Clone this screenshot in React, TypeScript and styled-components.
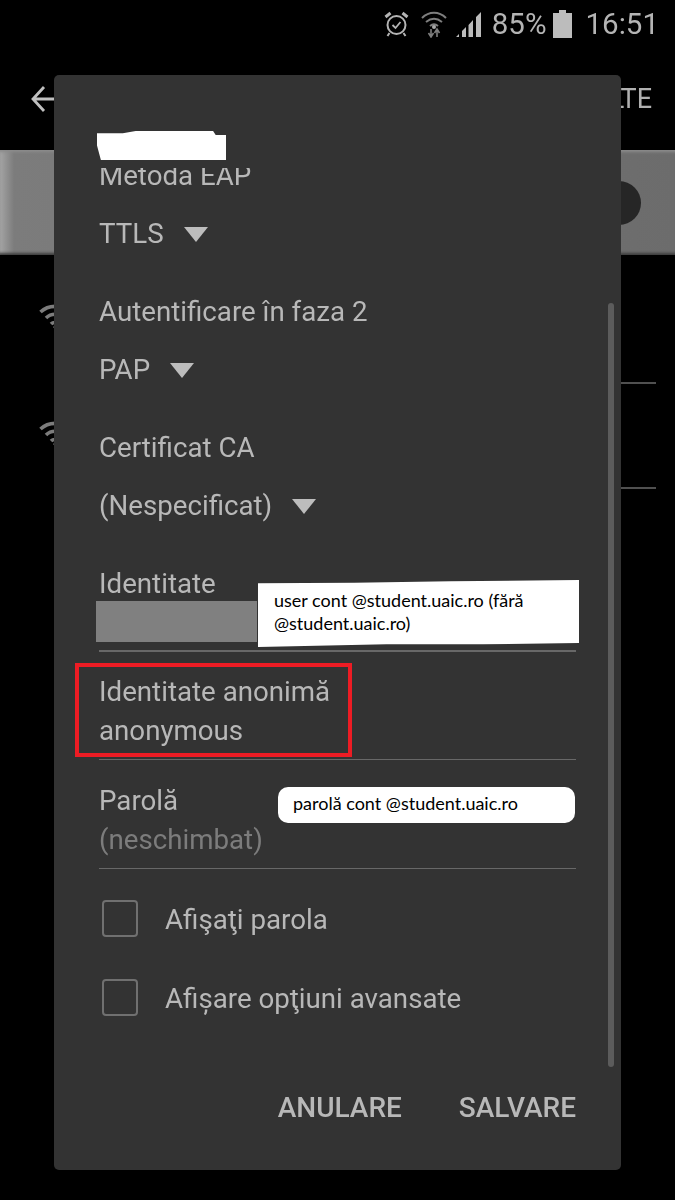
import React from 'react';
import styled, { createGlobalStyle } from 'styled-components';

const Global = createGlobalStyle`
  html, body { margin: 0; padding: 0; background: #000; }
  body { font-family: Roboto, "Liberation Sans", sans-serif; overflow: hidden; }
`;

const Page = styled.div`
  position: relative;
  width: 675px;
  height: 1200px;
  background: #000;
  overflow: hidden;
`;

const Backdrop = styled.div`
  display: flex;
  flex-direction: column;
  filter: blur(0.5px);
`;

const StatusBar = styled.div`
  height: 48px;
  display: flex;
  align-items: center;
  justify-content: flex-end;
  padding-right: 16px;
  color: #b4b4b4;
  font-size: 29.500px;
  line-height: 48px;
`;

const StatusIcon = styled.svg<{ $gap: number }>`
  display: block;
  margin-right: ${(p) => p.$gap}px;
  flex: none;
`;

const Percent = styled.span`
  margin-right: 6px;
`;

const Clock = styled.span`
  margin-left: 14px;
`;

const Toolbar = styled.div`
  height: 102px;
  display: flex;
  align-items: center;
  justify-content: space-between;
  padding: 0 23px 0 31px;
  box-sizing: border-box;
  color: #b0b0b0;
  font-size: 27px;
`;

const Band = styled.div`
  height: 105px;
  display: flex;
  align-items: center;
  justify-content: flex-end;
  padding-right: 34px;
  background: linear-gradient(90deg, #a4a4a4 0, #7c7c7c 14px, #6c6c6c 100%);
  box-shadow: inset 0 4px 3px -2px #8c8c8c, inset 0 -4px 3px -2px #3c3c3c;
`;

const Knob = styled.div`
  width: 44px;
  height: 44px;
  border-radius: 50%;
  background: #262626;
`;

const NetworkRow = styled.div<{ $h: number; $top: number }>`
  height: ${(p) => p.$h}px;
  box-sizing: border-box;
  display: flex;
  flex-direction: column;
  justify-content: space-between;
  padding: ${(p) => p.$top}px 19px 0 39px;
`;

const RowRule = styled.div`
  align-self: flex-end;
  width: 120px;
  height: 2px;
  background: #505050;
`;

const RowGlyph = styled.svg`
  display: block;
`;

const Dialog = styled.div`
  position: absolute;
  left: 54px;
  top: 75px;
  width: 567px;
  height: 1095px;
  box-sizing: border-box;
  padding-top: 93px;
  background: #333;
  border-radius: 5px;
  display: flex;
  flex-direction: column;
  color: #b8b8b8;
  font-size: 27.700px;
  line-height: 39px;
`;

const ScrollArea = styled.div`
  flex: 1;
  min-height: 0;
  overflow: hidden;
  padding: 0 45px;
  filter: blur(0.3px);
`;

const Form = styled.div`
  display: flex;
  flex-direction: column;
  margin-top: -12px;
`;

const SelectField = styled.div`
  display: flex;
  flex-direction: column;
  gap: 19px;
  margin-bottom: 39px;
`;

const Label = styled.div``;

const SelectValue = styled.div`
  display: flex;
  align-items: center;
  gap: 20px;
`;

const Caret = styled.span`
  width: 0;
  height: 0;
  border-left: 12.500px solid transparent;
  border-right: 12.500px solid transparent;
  border-top: 15px solid #bdbdbd;
  margin-top: 2px;
`;

const TextField = styled.div<{ $top: number; $bottom: number; $rule: number }>`
  display: flex;
  flex-direction: column;
  padding-top: ${(p) => p.$top}px;
  padding-bottom: ${(p) => p.$bottom}px;
  border-bottom: ${(p) => p.$rule}px solid #686868;
`;

const Redacted = styled.div`
  width: 161px;
  height: 41px;
  margin: -2px 0 0 -3px;
  background: #808080;
`;

const Placeholder = styled.div`
  color: #7c7c7c;
`;

const CheckRow = styled.div<{ $top: number }>`
  display: flex;
  align-items: center;
  gap: 27px;
  height: 39px;
  margin-top: ${(p) => p.$top}px;
  padding-left: 3px;
`;

const Box = styled.span`
  width: 36px;
  height: 37px;
  margin-top: -2px;
  box-sizing: border-box;
  border: 2px solid #707070;
  border-radius: 4px;
  flex: none;
`;

const Actions = styled.div`
  display: flex;
  justify-content: flex-end;
  gap: 57px;
  padding: 0 45px 43px;
  font-size: 28px;
  font-weight: 500;
  filter: blur(0.3px);
`;

const Scrollbar = styled.div`
  position: absolute;
  left: 554px;
  top: 228px;
  width: 6px;
  height: 764px;
  border-radius: 3px;
  background: #5c5c5c;
`;

const Blob = styled.div<{ $r?: number }>`
  position: absolute;
  background: #fff;
  color: #000;
  font-family: Lato, "Open Sans", sans-serif;
  font-size: 18px;
  line-height: 23px;
  border-radius: ${(p) => p.$r ?? 0}px;
  box-sizing: border-box;
`;

const TopBlob = styled(Blob)`
  left: 43px;
  top: 56px;
  width: 129px;
  height: 29px;
  clip-path: polygon(0 8%, 20% 8%, 30% 0, 90% 0, 92% 14%, 100% 14%, 100% 100%, 3% 100%, 0 50%);
`;

const IdentityNote = styled(Blob)`
  left: 204px;
  top: 505px;
  width: 321px;
  height: 67px;
  padding: 9px 10px 0 16px;
  clip-path: polygon(0 5%, 30% 4%, 60% 2%, 100% 0, 100% 94%, 70% 96%, 40% 96%, 0 100%);
`;

const PasswordNote = styled(Blob)`
  left: 224px;
  top: 712px;
  width: 297px;
  height: 36px;
  padding: 5px 0 0 15px;
`;

const Highlight = styled.div`
  position: absolute;
  left: 21px;
  top: 588px;
  width: 277px;
  height: 94px;
  box-sizing: border-box;
  border: 4px solid #ed1c24;
`;

const Wifi = () => (
  <RowGlyph width={32} height={24} viewBox="0 0 32 24" fill="none" stroke="#7c7c7c" strokeWidth="3.600">
    <path d="M1.500 8c8-7.500 21-7.500 29 0" />
    <path d="M7 14c5-5 13-5 18 0" />
    <path d="M12 20c2-2 6-2 8 0" />
    <circle cx="16" cy="23" r="1.600" fill="#7c7c7c" stroke="none" />
  </RowGlyph>
);

export default function App() {
  return (
    <Page>
      <Global />
      <Backdrop>
        <StatusBar>
          <StatusIcon $gap={12} width="25" height="26" viewBox="0 0 25 26" fill="none" stroke="#b4b4b4" strokeWidth="2">
            <circle cx="12.500" cy="14" r="9" />
            <path d="M8.500 14l3 3 5-6" strokeWidth="1.800" />
            <path d="M1.500 6l5-4M23.500 6l-5-4" strokeWidth="3" />
            <path d="M5.500 22l-2 3M19.500 22l2 3" />
          </StatusIcon>
          <StatusIcon $gap={9} width="26" height="28" viewBox="0 0 26 28" fill="none" stroke="#7e7e7e" strokeWidth="2">
            <path d="M1 8c7-7 17-7 24 0" />
            <path d="M5 12c5-4 11-4 16 0" />
            <path d="M9 16c2.500-2 5.500-2 8 0" />
            <circle cx="13" cy="17" r="2" fill="#a8a8a8" stroke="none" />
            <path d="M10 19v8M7.500 23l2.500 4 2.500-4M16 27v-8M13.500 23l2.500-4 2.500 4" strokeWidth="1.600" />
          </StatusIcon>
          <StatusIcon $gap={11} width="25" height="25" viewBox="0 0 25 25" fill="#bcbcbc">
            <path d="M0 25l3-3v3zM6 25v-6l4-4v10zM12.500 25V13l4.500-5v17zM20 25V5l5-5v25z" />
          </StatusIcon>
          <Percent>85%</Percent>
          <StatusIcon $gap={0} width="19" height="28" viewBox="0 0 19 28" fill="#bcbcbc">
            <path d="M6 0h7v3h6v25H0V3h6z" />
          </StatusIcon>
          <Clock>16:51</Clock>
        </StatusBar>
        <Toolbar>
          <svg width="24" height="28" viewBox="0 0 24 28" fill="none" stroke="#c0c0c0" strokeWidth="2.800">
            <path d="M24 14H2M13 2L2 14l11 12" />
          </svg>
          <span>MULTE</span>
        </Toolbar>
        <Band>
          <Knob />
        </Band>
        <NetworkRow $h={129} $top={49}>
          <Wifi />
          <RowRule />
        </NetworkRow>
        <NetworkRow $h={105} $top={37}>
          <Wifi />
          <RowRule />
        </NetworkRow>
      </Backdrop>

      <Dialog>
        <ScrollArea>
          <Form>
            <SelectField>
              <Label>Metoda EAP</Label>
              <SelectValue>TTLS <Caret /></SelectValue>
            </SelectField>
            <SelectField>
              <Label>Autentificare în faza 2</Label>
              <SelectValue>PAP <Caret /></SelectValue>
            </SelectField>
            <SelectField>
              <Label>Certificat CA</Label>
              <SelectValue>(Nespecificat) <Caret /></SelectValue>
            </SelectField>
            <TextField $top={0} $bottom={8} $rule={2}>
              <Label>Identitate</Label>
              <Redacted />
            </TextField>
            <TextField $top={20} $bottom={9} $rule={1}>
              <Label>Identitate anonimă</Label>
              <Label>anonymous</Label>
            </TextField>
            <TextField $top={21} $bottom={9} $rule={1}>
              <Label>Parolă</Label>
              <Placeholder>(neschimbat)</Placeholder>
            </TextField>
            <CheckRow $top={31}>
              <Box />
              Afişaţi parola
            </CheckRow>
            <CheckRow $top={40}>
              <Box />
              Afișare opţiuni avansate
            </CheckRow>
          </Form>
        </ScrollArea>
        <Actions>
          <span>ANULARE</span>
          <span>SALVARE</span>
        </Actions>
        <Scrollbar />
        <TopBlob />
        <IdentityNote>user cont @student.uaic.ro (fără @student.uaic.ro)</IdentityNote>
        <PasswordNote $r={10}>parolă cont @student.uaic.ro</PasswordNote>
        <Highlight />
      </Dialog>
    </Page>
  );
}
